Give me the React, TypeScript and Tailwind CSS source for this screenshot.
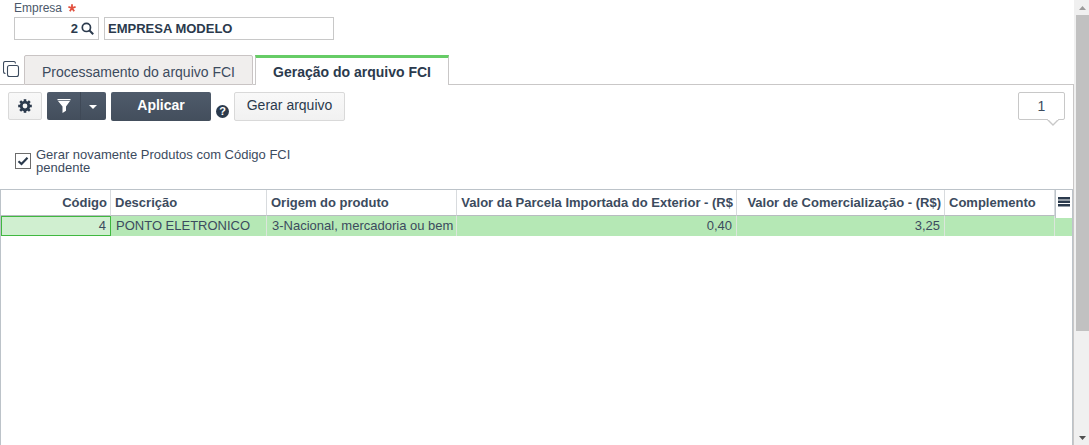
import { useState } from "react";

type Column = {
  label: string;
  value: string;
  numeric?: boolean;
};

const columns: Column[] = [
  { label: "Código", value: "4", numeric: true },
  { label: "Descrição", value: "PONTO ELETRONICO" },
  { label: "Origem do produto", value: "3-Nacional, mercadoria ou bem" },
  {
    label: "Valor da Parcela Importada do Exterior - (R$",
    value: "0,40",
    numeric: true,
  },
  { label: "Valor de Comercialização - (R$)", value: "3,25", numeric: true },
  { label: "Complemento", value: "" },
];

function CopyIcon() {
  return (
    <svg
      width="17"
      height="17"
      viewBox="0 0 17 17"
      fill="none"
      stroke="#3c4b5e"
      strokeWidth="1.1"
    >
      <rect x="4.5" y="4.5" width="11" height="11" rx="2" />
      <path d="M2.5 12.5C1.3 12.5 .5 11.7 .5 10.5V2.5C.5 1.3 1.3 .5 2.5 .5H10.5C11.7 .5 12.5 1.3 12.5 2.5" />
    </svg>
  );
}

function SearchIcon() {
  return (
    <svg
      width="13"
      height="13"
      viewBox="0 0 13 13"
      fill="none"
      stroke="#2b3a4d"
      strokeWidth="1.7"
    >
      <circle cx="5.4" cy="5.4" r="4.1" />
      <path d="M8.3 8.3L12.2 12.2" strokeWidth="2" />
    </svg>
  );
}

function GearIcon() {
  return (
    <svg width="14" height="14" viewBox="0 0 14 14" fill="#2b3a4d">
      {[0, 45, 90, 135].map((angle) => (
        <rect
          key={angle}
          x="5.7"
          y="0.2"
          width="2.6"
          height="13.6"
          transform={`rotate(${angle} 7 7)`}
        />
      ))}
      <circle cx="7" cy="7" r="5.2" />
      <circle cx="7" cy="7" r="2.4" fill="#f5f5f5" />
    </svg>
  );
}

function FunnelIcon() {
  return (
    <svg width="14" height="14" viewBox="0 0 14 14" fill="#fff">
      <path d="M.5 0h13v1.3H.5zM1 2h12L9 7.4v4.3L5.5 14V7.4z" />
    </svg>
  );
}

function Field() {
  return (
    <div className="flex flex-col px-3.5 pt-0.5 text-[#2b3a4d]">
      <label
        htmlFor="empresa"
        className="flex items-center gap-1.5 text-xs leading-3 text-[#4b586a]"
      >
        Empresa
        <svg
          width="8"
          height="8"
          viewBox="0 0 8 8"
          stroke="#e2513f"
          strokeWidth="1.8"
        >
          <path d="M4 4V.2M4 4L.4 2.9M4 4L7.6 2.9M4 4L1.8 7.2M4 4L6.2 7.2" />
        </svg>
      </label>
      <div className="mt-[3px] flex gap-[5px]">
        <div className="flex h-[23px] w-[85px] items-center border border-[#c8c8c8] pr-1">
          <input
            id="empresa"
            defaultValue="2"
            className="w-full min-w-0 text-right text-[13px] font-bold outline-none"
          />
          <button type="button" aria-label="Pesquisar" className="ml-[3px]">
            <SearchIcon />
          </button>
        </div>
        <input
          aria-label="Nome da empresa"
          defaultValue="EMPRESA MODELO"
          className="h-[23px] w-[230px] border border-[#c8c8c8] px-[3px] text-[13px] font-bold outline-none"
        />
      </div>
    </div>
  );
}

function Tabs() {
  return (
    <div className="mt-[15px] flex h-[30px]">
      <div className="flex w-6 items-center border-b border-[#c9c7c7] pl-[3px]">
        <button type="button" aria-label="Copiar">
          <CopyIcon />
        </button>
      </div>
      <button
        type="button"
        className="w-[229px] rounded-t-xs border border-[#c9c4c4] bg-[#f0eeed] pt-1 text-sm text-[#3c4b5e]"
      >
        Processamento do arquivo FCI
      </button>
      <div className="w-0.5 border-b border-[#c9c7c7]" />
      <button
        type="button"
        className="w-[194px] border-x border-t-3 border-x-[#c9c7c7] border-t-[#66cc66] text-sm font-bold text-[#2b3a4d]"
      >
        Geração do arquivo FCI
      </button>
      <div className="flex-1 border-b border-[#c9c7c7]" />
    </div>
  );
}

function Toolbar() {
  return (
    <div className="flex items-start px-2 pt-[7px] text-sm">
      <button
        type="button"
        aria-label="Configurações"
        className="flex h-7 w-[34px] items-center justify-center rounded-xs border border-[#d9d9d9] bg-linear-to-b from-[#f9f9f9] to-[#f1f1f1]"
      >
        <GearIcon />
      </button>
      <div className="ml-[5px] flex h-7 w-[59px] rounded-xs bg-linear-to-b from-[#4f5b6b] to-[#434e5c]">
        <button
          type="button"
          aria-label="Filtro"
          className="flex w-[34px] items-center justify-center border-r border-[#3f4957]"
        >
          <FunnelIcon />
        </button>
        <button
          type="button"
          aria-label="Mais filtros"
          className="flex flex-1 items-center justify-center pt-0.5 pr-0.5"
        >
          <svg width="8" height="4" viewBox="0 0 8 4" fill="#fff">
            <path d="M0 0h8L4 4z" />
          </svg>
        </button>
      </div>
      <button
        type="button"
        className="ml-[5px] h-[29px] w-[100px] rounded-xs bg-linear-to-b from-[#4f5b6b] to-[#434e5c] pb-1 font-bold text-white"
      >
        Aplicar
      </button>
      <button
        type="button"
        aria-label="Ajuda"
        className="mx-[5px] mt-[13px] size-[13px] rounded-full bg-[#2b3a4d] text-center text-[11px] leading-[13px] font-bold text-white"
      >
        ?
      </button>
      <button
        type="button"
        className="h-[29px] w-[111px] rounded-xs border border-[#d9d9d9] bg-linear-to-b from-[#f9f9f9] to-[#f1f1f1] pb-1 text-[#2b3a4d]"
      >
        Gerar arquivo
      </button>
      <div className="relative ml-auto flex h-7 w-[47px] items-center justify-center rounded-xs border border-[#c8c8c8] bg-white text-[#3c4b5e]">
        1
        <svg
          className="absolute top-full right-[5px]"
          width="12"
          height="7"
          viewBox="0 0 12 7"
          fill="#fff"
          stroke="#c8c8c8"
          strokeWidth="1.4"
        >
          <path d="M.5 .5L6 6L11.500 .5" />
          <path d="M1 0H11" stroke="#fff" strokeWidth="2" />
        </svg>
      </div>
    </div>
  );
}

function PendingOption() {
  const [checked, setChecked] = useState(true);

  return (
    <label className="mt-[27px] ml-[15px] flex w-[290px] items-start gap-[5px] text-[13px] leading-[13px] text-[#3c4b5e]">
      <span className="relative mt-[5px] flex size-4 shrink-0">
        <input
          type="checkbox"
          checked={checked}
          onChange={(e) => setChecked(e.target.checked)}
          className="size-4 appearance-none border border-[#6c6c6c] bg-white"
        />
        {checked && (
          <svg
            className="pointer-events-none absolute inset-0"
            width="16"
            height="16"
            viewBox="0 0 16 16"
            fill="none"
            stroke="#2b3a4d"
            strokeWidth="2.2"
          >
            <path d="M3.5 8.3L6.5 11L12.5 4.8" />
          </svg>
        )}
      </span>
      Gerar novamente Produtos com Código FCI pendente
    </label>
  );
}

function Grid() {
  return (
    <div className="mt-[15px] flex-1 border-x border-t border-[#bcc3c9]">
      <table className="w-full table-fixed border-separate border-spacing-0 text-[13px] leading-4 whitespace-nowrap text-[#3c4b5e]">
        <colgroup>
          <col className="w-[110px]" />
          <col className="w-[156px]" />
          <col className="w-[190px]" />
          <col className="w-[280px]" />
          <col className="w-[208px]" />
          <col />
          <col className="w-[17px]" />
        </colgroup>
        <thead>
          <tr className="h-[26px]">
            {columns.map((col) => (
              <th
                key={col.label}
                className={`overflow-hidden border-r border-b border-r-[#d8dbde] border-b-[#b8bcc0] p-0 px-[3px] font-bold ${
                  col.numeric ? "text-right" : "pl-1 text-left"
                }`}
              >
                {col.label}
              </th>
            ))}
            {/* column menu hangs a little over the first row */}
            <th className="relative p-0">
              <button
                type="button"
                aria-label="Colunas"
                className="absolute inset-x-0 top-0 flex h-7 justify-center border-l border-[#bcc3c9] bg-white pt-[7px]"
              >
                <svg width="12" height="10" viewBox="0 0 12 10" fill="#2b3a4d">
                  <path d="M0 0h12v2.400H0zM0 3.500h12v2.400H0zM0 7h12v2.400H0z" />
                </svg>
              </button>
            </th>
          </tr>
        </thead>
        <tbody>
          <tr className="h-5 bg-[#b5e8b5]">
            {columns.map((col, i) => (
              <td
                key={col.label}
                className={`overflow-hidden p-0 ${
                  i === 0
                    ? "border border-[#40b840] bg-[#d0efd0]"
                    : "border-r border-[#dce6dc]"
                } ${col.numeric ? "pr-1 text-right" : "pl-[5px] text-left"}`}
              >
                {col.value}
              </td>
            ))}
            <td className="p-0" />
          </tr>
        </tbody>
      </table>
    </div>
  );
}

function Scrollbar() {
  return (
    <div className="flex w-[15px] shrink-0 flex-col items-end bg-[#f0f0f0]">
      <div className="flex h-[15px] w-[13px] shrink-0 items-center justify-center">
        <svg width="7" height="4" viewBox="0 0 7 4" fill="#9b9b9b">
          <path d="M0 4h7L3.5 0z" />
        </svg>
      </div>
      <div className="h-[71%] w-[13px] bg-[#c1c1c1]" />
      <div className="mt-auto flex h-[15px] w-[13px] shrink-0 items-center justify-center">
        <svg width="7" height="4" viewBox="0 0 7 4" fill="#505050">
          <path d="M0 0h7L3.5 4z" />
        </svg>
      </div>
    </div>
  );
}

export default function App() {
  return (
    <div className="flex h-screen bg-white font-['Liberation_Sans',Arial,sans-serif]">
      <main className="flex min-w-0 flex-1 flex-col">
        <Field />
        <Tabs />
        <div className="flex flex-1 flex-col border-r border-[#c9c7c7]">
          <Toolbar />
          <PendingOption />
          <Grid />
        </div>
      </main>
      <Scrollbar />
    </div>
  );
}
